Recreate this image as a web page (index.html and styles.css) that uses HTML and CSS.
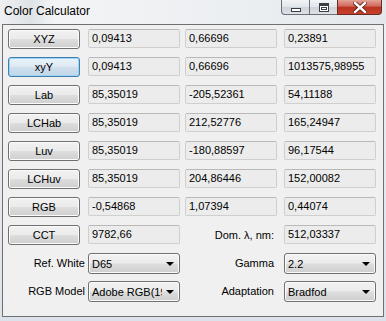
FILE: index.html
```html
<!DOCTYPE html>
<html lang="en">
  <head>
    <meta charset="UTF-8" />
    <title>Color Calculator</title>
    <link rel="stylesheet" href="styles.css">
  </head>
  <body>
    <div class="window">
      <div class="titlebar">
        <span class="title">Color Calculator</span>
        <div class="caption-buttons">
          <div class="cap-btn cap-min"><span class="min-glyph"></span></div>
          <div class="cap-btn cap-max"><span class="max-glyph"></span></div>
          <div class="cap-btn cap-close">
            <svg width="14" height="11" viewBox="0 0 14 11">
              <path d="M2 1 L12 10 M12 1 L2 10" stroke="#5a1a14" stroke-width="4" stroke-linecap="square" />
              <path d="M2 1 L12 10 M12 1 L2 10" stroke="#ffffff" stroke-width="2.4" stroke-linecap="square" />
            </svg>
          </div>
        </div>
      </div>

      <div class="client">
        <div class="grid">
          <button class="btn">XYZ</button>
          <div class="field">0,09413</div>
          <div class="field">0,66696</div>
          <div class="field">0,23891</div>

          <button class="btn focused">xyY</button>
          <div class="field">0,09413</div>
          <div class="field">0,66696</div>
          <div class="field">1013575,98955</div>

          <button class="btn">Lab</button>
          <div class="field">85,35019</div>
          <div class="field">-205,52361</div>
          <div class="field">54,11188</div>

          <button class="btn">LCHab</button>
          <div class="field">85,35019</div>
          <div class="field">212,52776</div>
          <div class="field">165,24947</div>

          <button class="btn">Luv</button>
          <div class="field">85,35019</div>
          <div class="field">-180,88597</div>
          <div class="field">96,17544</div>

          <button class="btn">LCHuv</button>
          <div class="field">85,35019</div>
          <div class="field">204,86446</div>
          <div class="field">152,00082</div>

          <button class="btn">RGB</button>
          <div class="field">-0,54868</div>
          <div class="field">1,07394</div>
          <div class="field">0,44074</div>

          <button class="btn">CCT</button>
          <div class="field">9782,66</div>
          <div class="label label-right">Dom. &lambda;, nm:</div>
          <div class="field">512,03337</div>

          <div class="label">Ref. White</div>
          <div class="combo"><span class="combo-text">D65</span><span class="arrow"></span></div>
          <div class="label label-right">Gamma</div>
          <div class="combo"><span class="combo-text">2.2</span><span class="arrow"></span></div>

          <div class="label">RGB Model</div>
          <div class="combo"><span class="combo-text">Adobe RGB(1998)</span><span class="arrow"></span></div>
          <div class="label label-right">Adaptation</div>
          <div class="combo"><span class="combo-text">Bradfod</span><span class="arrow"></span></div>
        </div>
      </div>
    </div>
  </body>
</html>
```

FILE: styles.css
```css
* {
  box-sizing: border-box;
  margin: 0;
  padding: 0;
}

body {
  width: 386px;
  height: 321px;
  overflow: hidden;
  font-family: "Liberation Sans", Arial, sans-serif;
  font-size: 11px;
  color: #000000;
  background-color: #dfe5ec;
}

.window {
  width: 386px;
  height: 321px;
  background: linear-gradient(to bottom, #eef1f4 0%, #e4e9ef 60%, #dce2e9 100%);
  display: flex;
  flex-direction: column;
}

.titlebar {
  height: 24px;
  display: flex;
  justify-content: space-between;
  align-items: flex-start;
  background: linear-gradient(to right, #eef0f2 0%, #dfe3e7 8%, #f3f4f5 14%, #eceff2 60%, #e4e8ec 100%);
}

.title {
  padding: 2px 0 0 4px;
  font-size: 12px;
  line-height: 18px;
  color: #000000;
}

.caption-buttons {
  display: flex;
  margin-right: 4px;
}

.cap-btn {
  height: 15px;
  border: 1px solid #6b6f75;
  border-top: none;
  display: flex;
  align-items: center;
  justify-content: center;
}

.cap-min {
  width: 28px;
  border-bottom-left-radius: 4px;
  border-right: none;
  background: linear-gradient(to bottom, #f2f4f6 0%, #e1e5ea 50%, #cdd3da 51%, #dde2e8 100%);
}

.cap-max {
  width: 28px;
  border-right: none;
  background: linear-gradient(to bottom, #f2f4f6 0%, #e1e5ea 50%, #cdd3da 51%, #dde2e8 100%);
}

.cap-close {
  width: 45px;
  border-bottom-right-radius: 4px;
  border-color: #6b2a22;
  background: linear-gradient(to bottom, #e3a397 0%, #d0675a 45%, #b8321f 50%, #c7412c 100%);
}

.min-glyph {
  width: 10px;
  height: 4px;
  margin-top: 5px;
  border: 1px solid #3b3f45;
  background-color: #ffffff;
}

.max-glyph {
  width: 10px;
  height: 9px;
  border: 1px solid #3b3f45;
  border-top-width: 3px;
  background-color: #ffffff;
  box-shadow: inset 0 0 0 1px #ffffff, inset 0 0 0 2px #3b3f45;
}

.client {
  flex: 1;
  margin: 0 2px 4px 2px;
  border: 1px solid #707070;
  background-color: #f0f0f0;
  padding: 4px 0 0 5px;
}

.grid {
  display: grid;
  grid-template-columns: 80px 97px 99px 92px;
  grid-auto-rows: 20px;
  row-gap: 8px;
}

.btn {
  width: 72px;
  height: 20px;
  font-family: "Liberation Sans", Arial, sans-serif;
  font-size: 11px;
  color: #000000;
  border: 1px solid #707070;
  border-radius: 3px;
  background: linear-gradient(to bottom, #f2f2f2 0%, #ebebeb 48%, #dddddd 52%, #cfcfcf 100%);
  box-shadow: inset 0 0 0 1px #fbfbfb;
}

.btn.focused {
  border-color: #3c7fb1;
  background: linear-gradient(to bottom, #eaf3fa 0%, #dde9f3 48%, #cfdfec 52%, #c1d6e8 100%);
  box-shadow: inset 0 0 0 1px #9fd4f3;
}

.field {
  width: 92px;
  height: 19px;
  padding: 0 0 0 3px;
  line-height: 17px;
  border: 1px solid #cfcfcf;
  border-top-color: #b9b9b9;
  border-radius: 2px;
  background-color: #ececec;
  white-space: nowrap;
  overflow: hidden;
}

.label {
  line-height: 20px;
  text-align: right;
  padding-right: 3px;
}

.label-right {
  padding-right: 10px;
}

.combo {
  width: 92px;
  height: 21px;
  display: flex;
  align-items: center;
  border: 1px solid #707070;
  border-radius: 3px;
  background: linear-gradient(to bottom, #f2f2f2 0%, #ebebeb 48%, #dddddd 52%, #cfcfcf 100%);
  box-shadow: inset 0 0 0 1px #fbfbfb;
}

.combo-text {
  flex: 1;
  padding-left: 3px;
  white-space: nowrap;
  overflow: hidden;
}

.arrow {
  width: 0;
  height: 0;
  margin: 0 5px 0 4px;
  border-left: 4px solid transparent;
  border-right: 4px solid transparent;
  border-top: 4px solid #000000;
}
```
